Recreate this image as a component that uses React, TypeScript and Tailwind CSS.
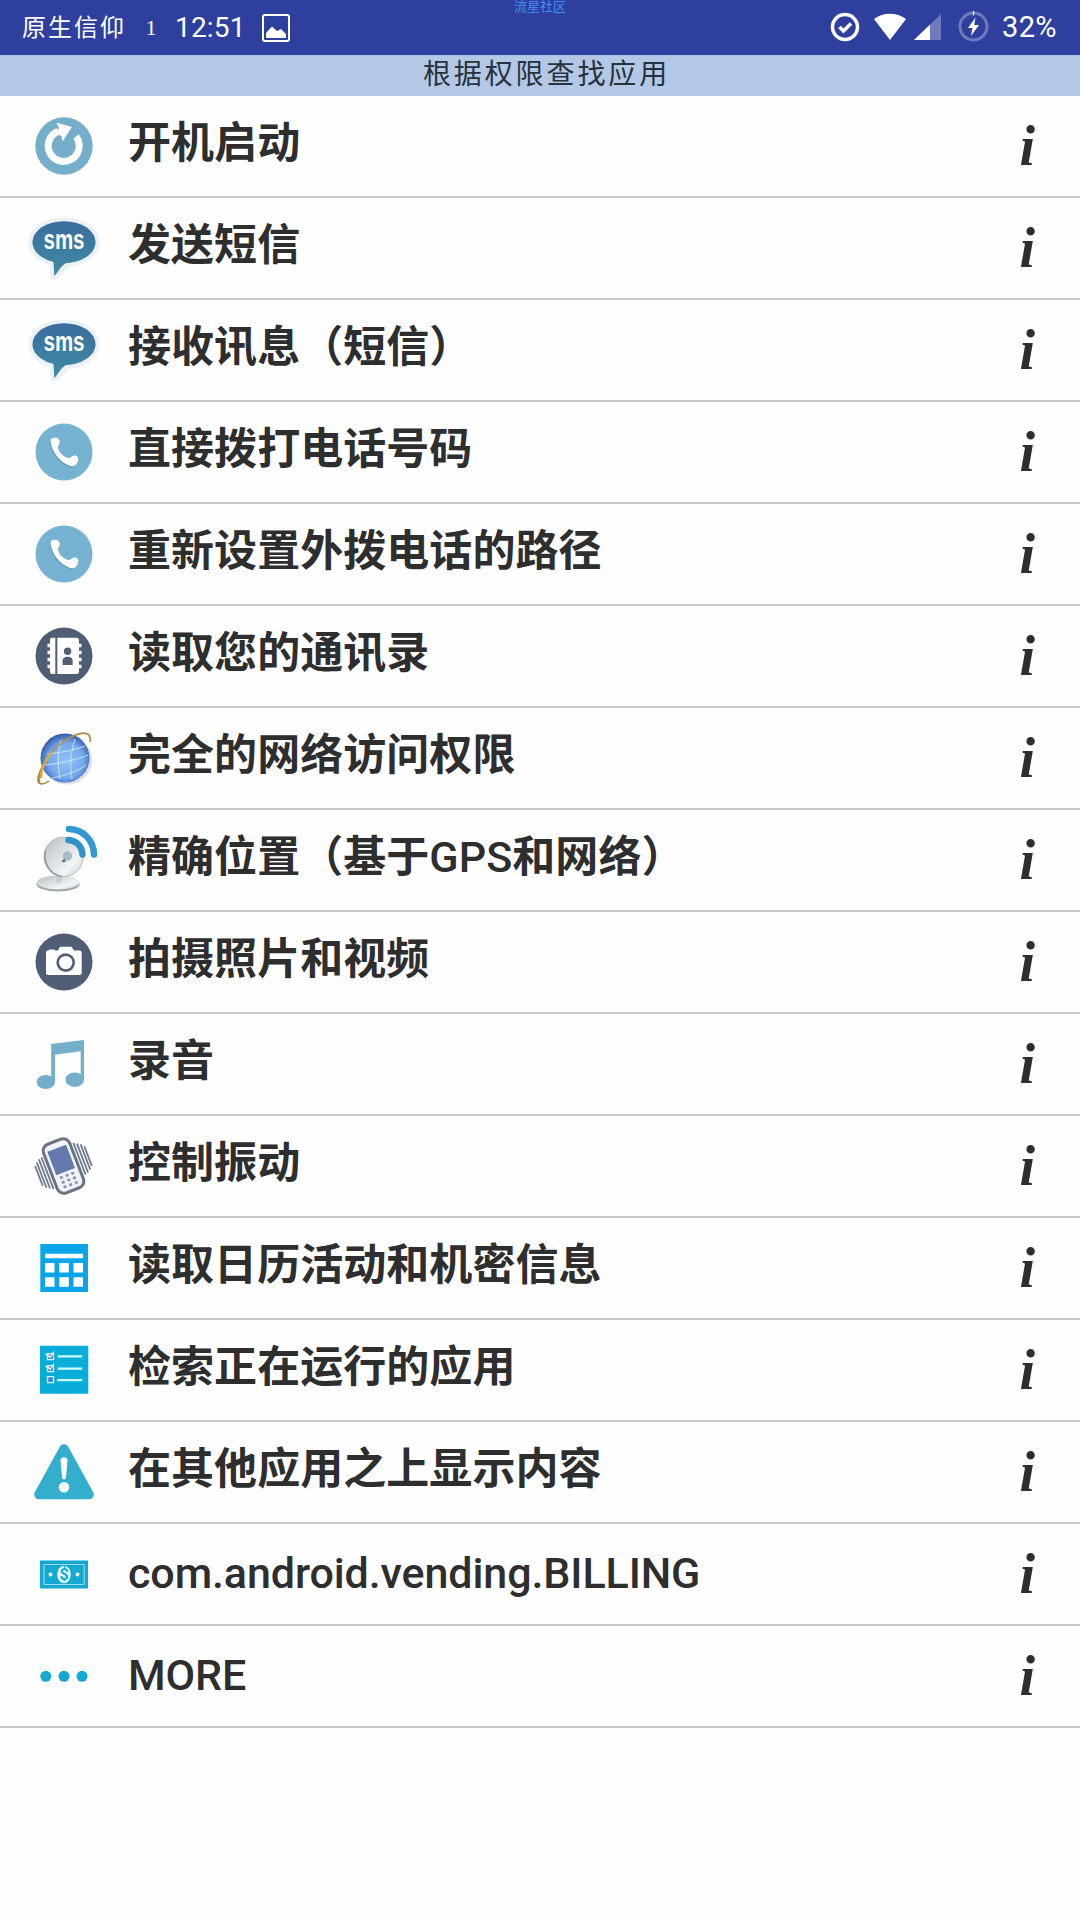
import { ReactNode } from "react";

interface IconProps {
  children: ReactNode;
}

const Icon = ({ children }: IconProps) => (
  <svg className="w-[72px] h-[72px] shrink-0 overflow-visible" viewBox="0 0 72 72" fill="none">
    {children}
  </svg>
);

const BootIcon = () => (
  <Icon>
    <circle cx="36" cy="36" r="28.700" fill="#74aeca" />
    <path d="M48 26.500a15.500 15.500 0 1 1-18-5" stroke="#fff" strokeWidth="7" />
    <path d="M28.500 12.500 43.800 17 34.500 31.500 33.500 26 27 23 31 18Z" fill="#fff" />
    <path d="M49.500 20 43 28.500" stroke="#74aeca" strokeWidth="4" />
  </Icon>
);

const SmsIcon = () => (
  <Icon>
    <g stroke="#ebf1f4" strokeWidth="8" strokeLinejoin="round">
      <ellipse cx="36" cy="30.200" rx="31.600" ry="21" />
      <path d="M25.300 47 26.300 64 40.300 50Z" />
    </g>
    <g fill="url(#smsFill)">
      <ellipse cx="36" cy="30.200" rx="31.600" ry="21" />
      <path d="M25.300 47 26.300 64C31 60 32 53 40.300 50Z" />
    </g>
    <text
      transform="translate(36 37.2) scale(0.76 1)"
      textAnchor="middle"
      fill="#fff"
      fontSize="27"
      fontWeight="700"
      className="font-['Liberation_Sans',sans-serif]"
    >
      sms
    </text>
    <defs>
      <linearGradient id="smsFill" x1="0" y1="9" x2="0" y2="64" gradientUnits="userSpaceOnUse">
        <stop stopColor="#3b6c9e" />
        <stop offset="1" stopColor="#3f8ca3" />
      </linearGradient>
    </defs>
  </Icon>
);

const handset =
  "M22.500 25C22 22 29 20.500 31 23.500C33 27 30 29 30 31.500C30.500 36 36 41.500 40.500 42C43 42 44 39 47 39.500C51 40 51 44.500 48.500 48C47 50 45 51 42 50C32 46.500 23.500 36 22.500 25Z";

const PhoneIcon = () => (
  <Icon>
    <circle cx="36" cy="36" r="28.500" fill="#76b3d3" />
    <path d={handset} fill="#5c93b3" transform="translate(-0.6 1)" />
    <path d={handset} fill="#fff" />
  </Icon>
);

const ContactsIcon = () => (
  <Icon>
    <circle cx="36" cy="36" r="28.500" fill="#4f5d75" />
    <path d="M27.300 17.700H24a2 2 0 0 0-2 2V52a2 2 0 0 0 2 2h3.300ZM29.300 17.700H48.500a2.500 2.500 0 0 1 2.500 2.500V51.500a2.500 2.500 0 0 1-2.500 2.500H29.300Z" fill="#fff" />
    <path d="M19.500 25.500h4M19.500 32.500h4M19.500 39.500h4M19.500 46.500h4M49.500 25.500h4M49.500 32.500h4M49.500 39.500h4M49.500 46.500h4" stroke="#fff" strokeWidth="3.500" />
    <circle cx="39.600" cy="31.300" r="3.700" fill="#4f5d75" />
    <path d="M34.600 45v-4.500c0-5 10-5 10 0V45Z" fill="#4f5d75" />
  </Icon>
);

const GlobeIcon = () => (
  <Icon>
    <ellipse cx="39" cy="38" rx="25" ry="24.500" fill="#c9ccd4" opacity="0.600" />
    <circle cx="37" cy="36" r="24.500" fill="url(#globeFill)" />
    <g stroke="#d3ecff" strokeWidth="1" opacity="0.850">
      <path d="M33 18C29 32 30 45 32 57M47 17C42 32 42 44 44 57M19 32C32 31 46 28 57 24M16 43C30 42 48 38 60 33M24 56C36 54 48 50 58 43" />
    </g>
    <path d="M16 42C10 52 8 60 12 61.500C14 62.500 18 61 21 59" stroke="#a77b2b" strokeWidth="1.500" />
    <path d="M11.500 60C10 50 22 25 43 15C55 9 64 10 62 20" stroke="#b3924f" strokeWidth="1.800" />
    <path d="M13 56C13 48 17 38 24 30" stroke="#dfa93a" strokeWidth="2.500" />
    <defs>
      <radialGradient id="globeFill" cx="0.520" cy="0.550" r="0.550">
        <stop stopColor="#8fc3f8" />
        <stop offset="0.650" stopColor="#76a8ee" />
        <stop offset="1" stopColor="#315ba8" />
      </radialGradient>
    </defs>
  </Icon>
);

const DishIcon = () => (
  <Icon>
    <ellipse cx="30" cy="60" rx="21.500" ry="7.500" fill="#9da6a9" />
    <ellipse cx="30" cy="58.500" rx="21" ry="7" fill="url(#dishFill)" />
    <path d="M28 50h6v7c0 2-6 2-6 0Z" fill="#c5ced1" />
    <ellipse cx="35.500" cy="33" rx="19.500" ry="19.800" fill="url(#dishFill)" stroke="#b3babd" strokeWidth="1" />
    <path d="M17.500 26C15 38 21 50 34 52.500" stroke="#868e91" strokeWidth="1.200" />
    <circle cx="39.500" cy="32" r="4.700" fill="#a3bec6" />
    <path d="M33.500 37 36.500 34.500 38 37.500 34.500 38.500Z" fill="#66767c" />
    <path d="M40.500 16C48 16.500 54 22 54.500 30.500" stroke="#3191c9" strokeWidth="6.500" strokeLinecap="round" />
    <path d="M41 5C55 5.500 65.700 16 66 30.500" stroke="#3198d3" strokeWidth="6.500" strokeLinecap="round" />
    <defs>
      <linearGradient id="dishFill" x1="0" y1="0" x2="1" y2="1">
        <stop stopColor="#b6bdbf" />
        <stop offset="0.400" stopColor="#d8dddf" />
        <stop offset="0.700" stopColor="#f1f4f5" />
        <stop offset="1" stopColor="#c4cbce" />
      </linearGradient>
    </defs>
  </Icon>
);

const CameraIcon = () => (
  <Icon>
    <circle cx="36" cy="36" r="28.500" fill="#4f5d75" />
    <path d="M20 24.500 21.500 23.500H26L27.500 24.500H30L32 20.700H43.500L46 24.500H51.500Q53.700 24.500 53.700 26.500V47Q53.700 49 51.500 49H20Q18 49 18 47V26.500Q18 24.500 20 24.500Z" fill="#fff" />
    <circle cx="37.700" cy="36.600" r="8" stroke="#4f5d75" strokeWidth="2.600" />
  </Icon>
);

const MusicIcon = () => (
  <Icon>
    <g fill="#74aeca">
      <path d="M23.200 16 56 12V52H52.700V23.300L27 26.700V54H23.200Z" />
      <ellipse cx="17.800" cy="54" rx="9.200" ry="7" />
      <ellipse cx="46.700" cy="51.700" rx="9.300" ry="7.200" />
    </g>
  </Icon>
);

const VibrateIcon = () => (
  <Icon>
    <g transform="rotate(-21 35.500 36)">
      <path d="M18 20v34M14.900 21v31M11.800 23v27M9 26v21M53 18v34M56.100 20v31M59.200 22v27M62 25v21" stroke="#707c91" strokeWidth="1.800" />
      <rect x="21.500" y="10" width="28" height="52" rx="7" fill="#f0f3fa" stroke="#6a7285" strokeWidth="3" />
      <rect x="25.500" y="17" width="20" height="25" fill="#6479ae" />
      <path d="M28 46h15M28 51h15M28 56h15" stroke="#8b95ae" strokeWidth="2.700" strokeDasharray="3 3" />
    </g>
  </Icon>
);

const CalendarIcon = () => (
  <Icon>
    <path d="M12.300 12H60V60H12.300Z" fill="#09a5e8" />
    <path d="M17 21.700H55V26.300H17ZM17 31h9.500v9.500H17ZM31.300 31h9.500v9.500h-9.500ZM45.500 31H55v9.500h-9.500ZM17 45.300h9.500v9.500H17ZM31.300 45.300h9.500v9.500h-9.500ZM45.500 45.300H55v9.500h-9.500Z" fill="#fff" />
  </Icon>
);

const TasksIcon = () => (
  <Icon>
    <path d="M12 11.700H60.300V59.700H12Z" fill="#08add9" />
    <path d="M29.700 22.400H54.300M29.700 34.700H54.300M29.200 46.200H54.300" stroke="#d0fbff" strokeWidth="2.300" />
    <path d="M19.500 19.700h6v6h-6ZM19.500 31.700h6v6h-6ZM19.500 42.700h6v6h-6Z" fill="#3f7fe0" stroke="#d8f5ff" strokeWidth="1.300" />
    <path d="M17.500 20.500h2l2.500 3 4-6M17.500 32.500h2l2.500 3 4-6" stroke="#fff" strokeWidth="1.300" />
  </Icon>
);

const WarningIcon = () => (
  <Icon>
    <path d="M36 13 11 58.500H61Z" fill="#33aecd" stroke="#33aecd" strokeWidth="9.600" strokeLinejoin="round" />
    <path d="M32.500 24.500C32.500 20.300 39.500 20.300 39.500 24.500L38 41.500C37.700 44 34.300 44 34 41.500Z" fill="#fff" />
    <circle cx="36" cy="51.300" r="5.300" fill="#fff" />
  </Icon>
);

const BillingIcon = () => (
  <Icon>
    <path d="M12 22.500H60V50.500H12Z" fill="#14a9d0" />
    <path d="M16 26.500H56.200V46.500H16Z" stroke="#9ddeee" strokeWidth="1" />
    <ellipse cx="36" cy="36.500" rx="6.800" ry="8.800" fill="#e2f7fc" />
    <circle cx="22.500" cy="36.500" r="1.900" fill="#fff" />
    <circle cx="49.500" cy="36.500" r="1.900" fill="#fff" />
    <text x="36" y="42" textAnchor="middle" fill="#14a9d0" fontSize="16" fontWeight="700" className="font-['Roboto',sans-serif]">
      $
    </text>
  </Icon>
);

const MoreIcon = () => (
  <Icon>
    <g fill="#14a9d0">
      <circle cx="17.800" cy="36.300" r="5.500" />
      <circle cx="36" cy="36.300" r="5.500" />
      <circle cx="54" cy="36.300" r="5.500" />
    </g>
  </Icon>
);

interface Permission {
  label: ReactNode;
  icon: () => ReactNode;
  latin?: boolean;
}

const permissions: Permission[] = [
  { label: "开机启动", icon: BootIcon },
  { label: "发送短信", icon: SmsIcon },
  { label: "接收讯息（短信）", icon: SmsIcon },
  { label: "直接拨打电话号码", icon: PhoneIcon },
  { label: "重新设置外拨电话的路径", icon: PhoneIcon },
  { label: "读取您的通讯录", icon: ContactsIcon },
  { label: "完全的网络访问权限", icon: GlobeIcon },
  {
    label: (
      <>
        精确位置（基于<span className="font-medium">GPS</span>和网络）
      </>
    ),
    icon: DishIcon,
  },
  { label: "拍摄照片和视频", icon: CameraIcon },
  { label: "录音", icon: MusicIcon },
  { label: "控制振动", icon: VibrateIcon },
  { label: "读取日历活动和机密信息", icon: CalendarIcon },
  { label: "检索正在运行的应用", icon: TasksIcon },
  { label: "在其他应用之上显示内容", icon: WarningIcon },
  { label: "com.android.vending.BILLING", icon: BillingIcon, latin: true },
  { label: "MORE", icon: MoreIcon, latin: true },
];

const PermissionRow = ({ label, icon: RowIcon, latin }: Permission) => (
  <li className="flex h-[102px] items-center border-b-2 border-[#c9c9c4] pl-7 pr-[45px]">
    <RowIcon />
    <span
      className={
        latin
          ? "ml-7 flex-1 whitespace-nowrap pb-[3px] text-[43px] leading-[50px] font-medium tracking-[-0.1px]"
          : "ml-7 flex-1 whitespace-nowrap pb-[7px] text-[43px] leading-[50px] font-bold tracking-[0.05px]"
      }
    >
      {label}
    </span>
    <span className="font-['Liberation_Serif',serif] text-[56px] leading-[60px] font-bold italic">i</span>
  </li>
);

const StatusBar = () => (
  <div className="relative flex h-[55px] items-center bg-[#2f3f9e] pl-[22px] pr-[23px] text-white">
    <span className="text-[24px] tracking-[2px]">原生信仰</span>
    <span className="ml-[19px] w-3 text-center font-['Liberation_Serif',serif] text-[22px]">1</span>
    <span className="ml-[18px] w-[70px] text-[28px] tracking-[0.2px]">12:51</span>
    <svg className="ml-[17px] h-7 w-7" viewBox="0 0 28 28" fill="none">
      <rect x="1" y="1" width="26" height="26" rx="2" stroke="#fff" strokeWidth="2" />
      <path d="M4 24V19L10 12.500 15 17 19 15 24 20V24Z" fill="#fff" />
    </svg>
    <span className="absolute top-0 left-1/2 -translate-x-1/2 text-[13px] leading-[13px] text-[#3f8ff0]">流星社区</span>
    <div className="-mt-[2px] ml-auto flex items-center">
      <svg className="h-[30px] w-[30px]" viewBox="0 0 30 30" fill="none" stroke="#fff">
        <circle cx="15" cy="15" r="12.500" strokeWidth="3.500" />
        <path d="M9.500 15 13.500 19 21 11.500" strokeWidth="3.500" />
      </svg>
      <svg className="ml-3.5 h-7 w-8" viewBox="0 0 32 28">
        <path d="M0 6C9-1 23-1 32 6L16 27Z" fill="#fff" />
      </svg>
      <svg className="ml-2 h-7 w-[27px]" viewBox="0 0 27 28">
        <path d="M27 1V27H0Z" fill="#6f7abc" />
        <path d="M16 11.600V27H0Z" fill="#fff" />
      </svg>
      <svg className="ml-[17px] h-[31px] w-[31px]" viewBox="0 0 31 31" fill="none">
        <circle cx="15.500" cy="15.500" r="13.500" stroke="#6f7abc" strokeWidth="3" />
        <path d="M15.500 0V4.500" stroke="#fff" strokeWidth="1.200" />
        <path d="M17.500 6.500 10 17h4.500L13 25 21 14H16.200Z" fill="#fff" />
      </svg>
      <span className="ml-[13px] pt-[2px] text-[29px] tracking-[0.4px]">32%</span>
    </div>
  </div>
);

export default function App() {
  return (
    <div className="min-h-[1920px] w-[1080px] bg-[#fefefe] font-['Roboto','Noto_Sans_CJK_SC',sans-serif] text-[#2e2e2e]">
      <StatusBar />
      <h1 className="h-[41px] bg-[#b3c8e6] pl-[13px] text-center text-[28px] leading-[40px] tracking-[2.9px] font-normal text-[#27323c]">
        根据权限查找应用
      </h1>
      <ul>
        {permissions.map((permission, index) => (
          <PermissionRow key={index} {...permission} />
        ))}
      </ul>
    </div>
  );
}
